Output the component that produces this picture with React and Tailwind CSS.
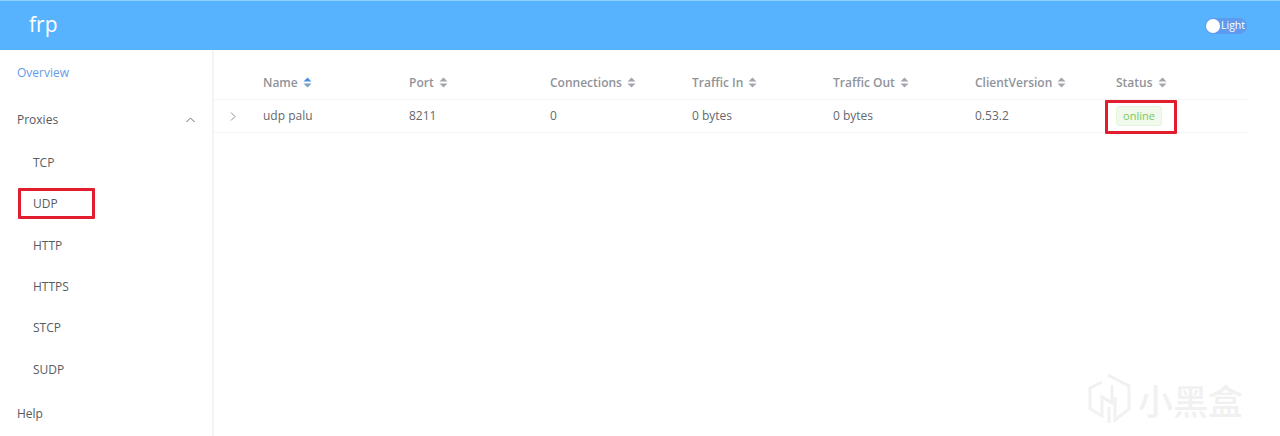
const Sort = ({ active }) => (
  <svg width="9" height="11" viewBox="0 0 9 11" className="ml-[5px] shrink-0">
    <path d="M4.5 0.5 L8.5 4.5 H0.5 Z" fill={active ? "#4a90e2" : "#a3a6ad"} />
    <path d="M4.5 10.5 L8.5 6.5 H0.5 Z" fill={active ? "#7d9dc4" : "#a3a6ad"} />
  </svg>
);

const columns = [
  { label: "Name", w: "w-[146px]", active: true, value: "udp palu" },
  { label: "Port", w: "w-[141px]", value: "8211" },
  { label: "Connections", w: "w-[142px]", value: "0" },
  { label: "Traffic In", w: "w-[141px]", value: "0 bytes" },
  { label: "Traffic Out", w: "w-[142px]", value: "0 bytes" },
  { label: "ClientVersion", w: "w-[141px]", value: "0.53.2" },
];

const subItems = ["TCP", "UDP", "HTTP", "HTTPS", "STCP", "SUDP"];

export default function App() {
  return (
    <div className="relative w-[1280px] h-[436px] overflow-hidden bg-white font-['Open_Sans','Noto_Sans',sans-serif] text-[12px] text-[#65686e]">
      <header className="h-[50px] bg-[#58b3fe] border-t border-[#8fd0ff] flex items-center justify-between pl-[29px] pr-[33px]">
        <span className="text-white text-[21px] leading-none -mt-[3px]">frp</span>
        <div className="relative flex items-center h-[16px] w-[42px] rounded-full bg-[#5e9bee]">
          <span className="w-[14px] h-[14px] rounded-full bg-white ml-[1px]" />
          <span className="text-white text-[10.5px] font-medium ml-[1px] leading-none">Light</span>
        </div>
      </header>
      <div className="flex h-[386px]">
        <aside className="w-[214px] shrink-0 border-r-2 border-[#f4f4f5] flex flex-col">
          <div className="h-[46px] mt-[1px] mb-[1px] pl-[17px] flex items-center text-[#5f9de8]">Overview</div>
          <div className="h-[48px] pl-[17px] pr-[17px] flex items-center justify-between text-[#55595f]">
            <span>Proxies</span>
            <svg width="9" height="6" viewBox="0 0 9 6" fill="none" stroke="#6b7076" strokeWidth="1">
              <path d="M0.5 5 L4.5 1 L8.5 5" />
            </svg>
          </div>
          <ul className="flex flex-col -mt-[1px]">
            {subItems.map((s) => (
              <li key={s} className="h-[41.3px] pl-[33px] flex items-center text-[#585c61]">{s}</li>
            ))}
          </ul>
          <div className="h-[46px] mt-[1px] pl-[17px] flex items-center text-[#55595f]">Help</div>
        </aside>
        <main className="flex-1 pr-[33px]">
          <div className="flex items-center h-[50px] border-b border-[#f3f4f6] pl-[49px] font-semibold text-[#909399]">
            {columns.map((c) => (
              <div key={c.label} className={`${c.w} flex items-center pt-[16px]`}>
                <span>{c.label}</span>
                <Sort active={c.active} />
              </div>
            ))}
            <div className="flex items-center pt-[16px]">
              <span>Status</span>
              <Sort />
            </div>
          </div>
          <div className="relative flex items-center h-[33px] border-b border-[#f3f4f6] pl-[49px]">
            <svg width="6" height="9" viewBox="0 0 6 9" fill="none" stroke="#8a8f96" strokeWidth="1" className="absolute left-[16px] top-[12px]">
              <path d="M1 0.5 L5 4.5 L1 8.5" />
            </svg>
            {columns.map((c) => (
              <div key={c.label} className={c.w}>{c.value}</div>
            ))}
            <span className="h-[20px] w-[46px] flex items-center justify-center rounded-[3px] bg-[#f0f9eb] border border-[#e6f5de] text-[#79c95a] text-[11px]">online</span>
          </div>
        </main>
      </div>
      <div className="absolute left-[18px] top-[188px] w-[77px] h-[31px] border-[3px] border-[#e11d2e] rounded-[1px]" />
      <div className="absolute left-[1105px] top-[100px] w-[72px] h-[34px] border-[3px] border-[#e11d2e] rounded-[1px]" />
      <div className="absolute left-[1088px] top-[373px] flex items-center gap-[6px] text-[#f1f1f1]">
        <svg width="44" height="52" viewBox="0 0 44 52" fill="none" stroke="#f1f1f1" strokeWidth="3">
          <path d="M14 9 L2 15 V36 L14 43 V24 L24 30 V12" />
          <path d="M20 2 L41 13 V36 L27 47 V24" />
          <path d="M21 34 V50" />
        </svg>
        <span className="text-[35px] leading-none font-medium font-['Noto_Sans_CJK_SC',sans-serif]">小黑盒</span>
      </div>
    </div>
  );
}
